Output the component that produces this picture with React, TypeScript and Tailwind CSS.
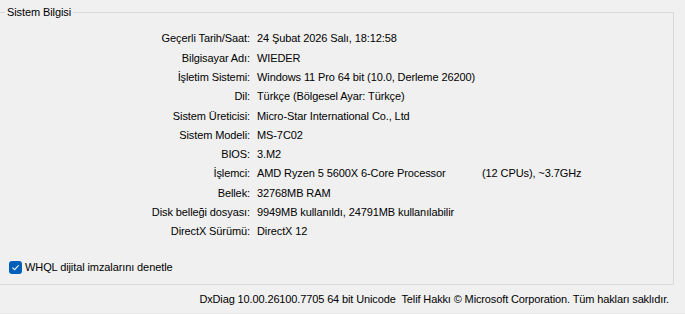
const rows: [string, string][] = [
  ["Geçerli Tarih/Saat:", "24 Şubat 2026 Salı, 18:12:58"],
  ["Bilgisayar Adı:", "WIEDER"],
  ["İşletim Sistemi:", "Windows 11 Pro 64 bit (10.0, Derleme 26200)"],
  ["Dil:", "Türkçe (Bölgesel Ayar: Türkçe)"],
  ["Sistem Üreticisi:", "Micro-Star International Co., Ltd"],
  ["Sistem Modeli:", "MS-7C02"],
  ["BIOS:", "3.M2"],
  ["İşlemci:", "AMD Ryzen 5 5600X 6-Core Processor"],
  ["Bellek:", "32768MB RAM"],
  ["Disk belleği dosyası:", "9949MB kullanıldı, 24791MB kullanılabilir"],
  ["DirectX Sürümü:", "DirectX 12"],
];

export default function App() {
  return (
    <div className="h-[314px] w-[685px] overflow-hidden border-b border-[#e6e6e6] bg-[#f0f0f0] font-['Liberation_Sans',Arial,sans-serif] text-[11px] tracking-[-0.1px] text-black">
      <fieldset className="ml-[-2px] h-[285px] w-[676px] border border-[#d9d9d9]">
        <legend className="ml-[6px] px-[2px] leading-[24px]">Sistem Bilgisi</legend>
        <div className="mt-[5px] grid grid-cols-[251px_1fr] gap-x-[7px]">
          {rows.map(([label, value]) => (
            <div key={label} className="contents">
              <div className="flex h-[19.3px] items-center justify-end whitespace-nowrap">{label}</div>
              <div className="flex h-[19.3px] items-center whitespace-nowrap">
                {label === "İşlemci:" ? (
                  <>
                    <span className="w-[225px]">{value}</span>
                    <span>(12 CPUs), ~3.7GHz</span>
                  </>
                ) : (
                  value
                )}
              </div>
            </div>
          ))}
        </div>
        <div className="mt-[18px] flex items-center gap-[3px] pl-[10px]">
          <span className="flex h-[13px] w-[13px] items-center justify-center rounded-[3px] bg-[#005fb8]">
            <svg width="9" height="9" viewBox="0 0 9 9" fill="none">
              <path d="M1.5 4.6 L3.6 6.6 L7.6 2.4" stroke="white" strokeWidth="1.1" />
            </svg>
          </span>
          <span>WHQL dijital imzalarını denetle</span>
        </div>
      </fieldset>
      <div className="flex h-[28px] items-center justify-end whitespace-nowrap pr-[16px] tracking-[-0.13px]">
        DxDiag 10.00.26100.7705 64 bit Unicode&nbsp;&nbsp;Telif Hakkı © Microsoft Corporation. Tüm hakları saklıdır.
      </div>
    </div>
  );
}
